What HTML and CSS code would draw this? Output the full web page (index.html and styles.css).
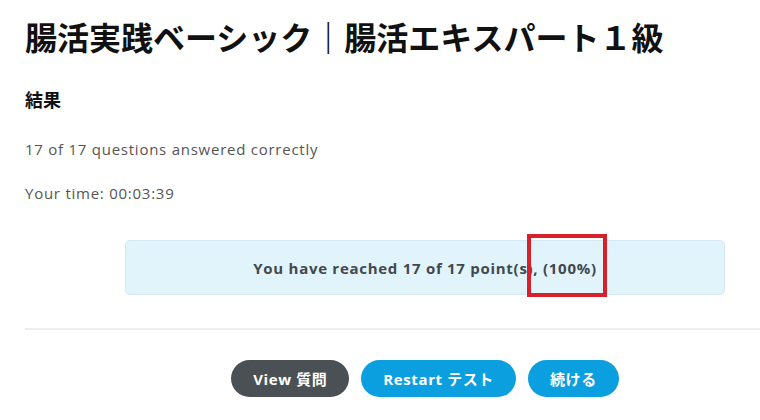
FILE: index.html
```html
<!DOCTYPE html>
<html lang="ja">
<head>
<meta charset="utf-8">
<link rel="stylesheet" href="styles.css">
</head>
<body>
<div class="page">
  <h1 class="title">腸活実践ベーシック｜腸活エキスパート１級</h1>
  <h2 class="subtitle">結果</h2>
  <p class="info">17 of 17 questions answered correctly</p>
  <p class="info time">Your time: 00:03:39</p>
  <div class="result-wrap">
    <div class="result-box">You have reached 17 of 17 point(s), (100%)</div>
    <div class="mark"></div>
  </div>
  <hr class="divider">
  <div class="actions">
    <button class="btn dark">View 質問</button>
    <button class="btn blue">Restart テスト</button>
    <button class="btn blue">続ける</button>
  </div>
</div>
</body>
</html>
```

FILE: styles.css
```css
html, body {
  margin: 0;
  padding: 0;
  background: #fff;
  overflow: hidden;
}
.page {
  width: 800px;
  padding: 16px 0 0 25px;
  font-family: "Open Sans", "Noto Sans CJK JP", sans-serif;
}
.title {
  margin: 0;
  font-family: "Noto Sans CJK JP", sans-serif;
  font-size: 32px;
  line-height: 40px;
  font-weight: 700;
  color: #111;
}
.subtitle {
  margin: 30px 0 0;
  font-family: "Noto Sans CJK JP", sans-serif;
  font-size: 18px;
  line-height: 26px;
  font-weight: 700;
  color: #111;
}
.info {
  margin: 25px 0 0;
  font-size: 15px;
  line-height: 24px;
  letter-spacing: 0.75px;
  color: #555;
}
.time {
  margin-top: 20px;
}
.result-wrap {
  position: relative;
  margin-top: 35px;
  display: flex;
  justify-content: center;
}
.result-box {
  width: 600px;
  height: 55px;
  box-sizing: border-box;
  border: 1px solid #d3e9f2;
  border-radius: 5px;
  background: #e1f4fc;
  display: flex;
  align-items: center;
  justify-content: center;
  font-weight: 700;
  font-size: 15px;
  letter-spacing: 0.72px;
  color: #41484e;
}
.mark {
  position: absolute;
  left: 502px;
  top: -6px;
  width: 72px;
  height: 55px;
  border: 4px solid #d8202a;
}
.divider {
  margin: 33px 0 0;
  border: 0;
  height: 2px;
  background: #eeeeee;
}
.actions {
  margin-top: 30px;
  display: flex;
  justify-content: center;
  gap: 12px;
}
.btn {
  height: 37px;
  border: 0;
  border-radius: 19px;
  padding: 0 22px;
  font-family: "Open Sans", "Noto Sans CJK JP", sans-serif;
  font-size: 15px;
  font-weight: 700;
  letter-spacing: 0.6px;
  color: #fff;
  cursor: pointer;
}
.dark { background: #4a5053; }
.blue { background: #0b9fe0; }
```
